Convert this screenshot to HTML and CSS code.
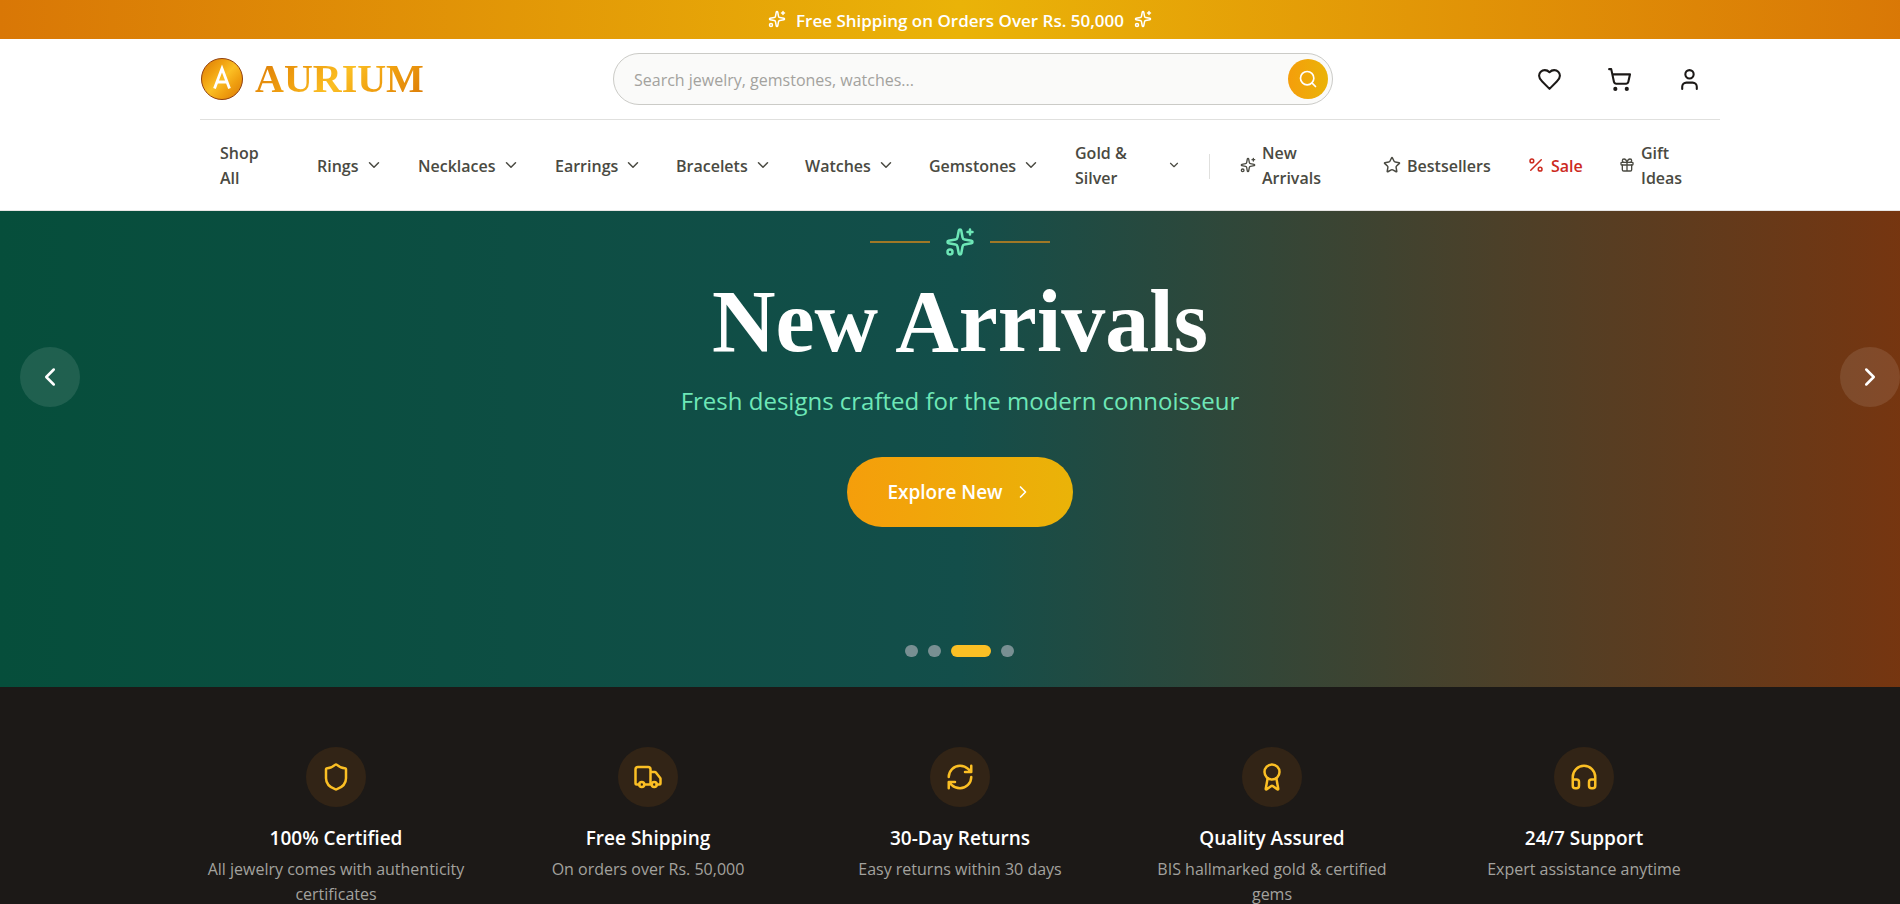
FILE: index.html
```html
<!DOCTYPE html>
<html lang="en">
<head>
<meta charset="utf-8">
<meta name="viewport" content="width=device-width, initial-scale=1">
<title>Aurium</title>
<link rel="stylesheet" href="styles.css">
</head>
<body>
<svg class="defs" aria-hidden="true">
  <symbol id="sparkles" viewBox="0 0 24 24"><path d="M11.017 2.814a1 1 0 0 1 1.966 0l1.051 5.558a2 2 0 0 0 1.594 1.594l5.558 1.051a1 1 0 0 1 0 1.966l-5.558 1.051a2 2 0 0 0-1.594 1.594l-1.051 5.558a1 1 0 0 1-1.966 0l-1.051-5.558a2 2 0 0 0-1.594-1.594l-5.558-1.051a1 1 0 0 1 0-1.966l5.558-1.051a2 2 0 0 0 1.594-1.594zM20 2v4M22 4h-4"/><circle cx="4" cy="20" r="2"/></symbol>
  <symbol id="down" viewBox="0 0 24 24"><path d="m6 9 6 6 6-6"/></symbol>
  <symbol id="right" viewBox="0 0 24 24"><path d="m9 18 6-6-6-6"/></symbol>
  <symbol id="left" viewBox="0 0 24 24"><path d="m15 18-6-6 6-6"/></symbol>
</svg>
<div class="page">
  <div class="promo">
    <svg class="icon i18"><use href="#sparkles"/></svg>
    <span>Free Shipping on Orders Over Rs. 50,000</span>
    <svg class="icon i18"><use href="#sparkles"/></svg>
  </div>
  <header class="header">
    <div class="wrap">
      <div class="top">
        <a class="brand" href="#">
          <svg class="mark" viewBox="0 0 44 44" aria-hidden="true">
            <defs><linearGradient id="gold" x1="0" y1="0" x2="1" y2="1"><stop offset="0" stop-color="#d97706"/><stop offset=".3" stop-color="#f0a010"/><stop offset=".5" stop-color="#fbbf24"/><stop offset=".7" stop-color="#f0a010"/><stop offset="1" stop-color="#d97706"/></linearGradient></defs>
            <circle cx="22" cy="22" r="20.5" fill="url(#gold)" stroke="#92400e"/>
            <path d="M14.500 31.500 22 11.500 29.500 31.500M17.500 25h9" fill="none" stroke="#fff" stroke-width="2.800"/>
          </svg>
          <span class="name">AURIUM</span>
        </a>
        <form class="search">
          <input type="text" aria-label="Search" placeholder="Search jewelry, gemstones, watches...">
          <button type="button" aria-label="Submit search"><svg class="icon i20" viewBox="0 0 24 24"><circle cx="11" cy="11" r="8"/><path d="m21 21-4.300-4.300"/></svg></button>
        </form>
        <div class="actions">
          <button type="button" aria-label="Wishlist"><svg class="icon i25" viewBox="0 0 24 24"><path d="M19 14c1.490-1.460 3-3.210 3-5.500A5.500 5.500 0 0 0 16.500 3c-1.760 0-3 .5-4.500 2-1.500-1.500-2.740-2-4.500-2A5.500 5.500 0 0 0 2 8.500c0 2.300 1.500 4.050 3 5.500l7 7Z"/></svg></button>
          <button type="button" aria-label="Cart"><svg class="icon i25" viewBox="0 0 24 24"><circle cx="8" cy="21" r="1"/><circle cx="19" cy="21" r="1"/><path d="M2.050 2.050h2l2.660 12.420a2 2 0 0 0 2 1.580h9.780a2 2 0 0 0 1.950-1.570l1.650-7.430H5.120"/></svg></button>
          <button type="button" aria-label="Account"><svg class="icon i25" viewBox="0 0 24 24"><circle cx="12" cy="7" r="4"/><path d="M19 21v-2a4 4 0 0 0-4-4H9a4 4 0 0 0-4 4v2"/></svg></button>
        </div>
      </div>
      <nav class="nav">
        <a href="#">Shop<br>All</a>
        <a href="#">Rings<svg class="icon i18"><use href="#down"/></svg></a>
        <a href="#">Necklaces<svg class="icon i18"><use href="#down"/></svg></a>
        <a href="#">Earrings<svg class="icon i18"><use href="#down"/></svg></a>
        <a href="#">Bracelets<svg class="icon i18"><use href="#down"/></svg></a>
        <a href="#">Watches<svg class="icon i18"><use href="#down"/></svg></a>
        <a href="#">Gemstones<svg class="icon i18"><use href="#down"/></svg></a>
        <a href="#"><span class="wide">Gold &amp;<br>Silver</span><svg class="icon i14"><use href="#down"/></svg></a>
        <span class="rule"></span>
        <a href="#"><svg class="icon i16"><use href="#sparkles"/></svg><span>New<br>Arrivals</span></a>
        <a href="#"><svg class="icon i18" viewBox="0 0 24 24"><path d="M11.525 2.295a.53.53 0 0 1 .95 0l2.310 4.679a2.120 2.120 0 0 0 1.595 1.160l5.166.756a.53.53 0 0 1 .294.904l-3.736 3.638a2.120 2.120 0 0 0-.611 1.878l.882 5.140a.53.53 0 0 1-.771.560l-4.618-2.428a2.120 2.120 0 0 0-1.973 0L6.396 21.010a.53.53 0 0 1-.770-.560l.881-5.139a2.120 2.120 0 0 0-.611-1.879L2.160 9.795a.53.53 0 0 1 .294-.906l5.165-.755a2.120 2.120 0 0 0 1.597-1.160z"/></svg>Bestsellers</a>
        <a href="#" class="sale"><svg class="icon i18" viewBox="0 0 24 24"><path d="M19 5 5 19"/><circle cx="6.500" cy="6.500" r="2.500"/><circle cx="17.500" cy="17.500" r="2.500"/></svg>Sale</a>
        <a href="#"><svg class="icon i16" viewBox="0 0 24 24"><rect x="3" y="8" width="18" height="4" rx="1"/><path d="M12 8v13M19 12v7a2 2 0 0 1-2 2H7a2 2 0 0 1-2-2v-7M7.500 8a2.500 2.500 0 0 1 0-5A4.800 8 0 0 1 12 8a4.800 8 0 0 1 4.500-5 2.500 2.500 0 0 1 0 5"/></svg><span>Gift<br>Ideas</span></a>
      </nav>
    </div>
  </header>
  <section class="hero">
    <button class="arrow" type="button" aria-label="Previous slide"><svg class="icon i30"><use href="#left"/></svg></button>
    <div class="slide">
      <div class="ornament"><span></span><svg class="icon i30"><use href="#sparkles"/></svg><span></span></div>
      <h1>New Arrivals</h1>
      <p>Fresh designs crafted for the modern connoisseur</p>
      <a class="cta" href="#">Explore New<svg class="icon i20"><use href="#right"/></svg></a>
      <div class="dots">
        <button type="button" aria-label="Slide 1"></button>
        <button type="button" aria-label="Slide 2"></button>
        <button type="button" aria-label="Slide 3" class="active"></button>
        <button type="button" aria-label="Slide 4"></button>
      </div>
    </div>
    <button class="arrow" type="button" aria-label="Next slide"><svg class="icon i30"><use href="#right"/></svg></button>
  </section>
  <section class="features">
    <div class="wrap grid">
      <div class="feature"><div class="disc"><svg class="icon i30" viewBox="0 0 24 24"><path d="M20 13c0 5-3.500 7.500-7.660 8.950a1 1 0 0 1-.670-.010C7.500 20.500 4 18 4 13V6a1 1 0 0 1 1-1c2 0 4.500-1.200 6.240-2.720a1.170 1.170 0 0 1 1.520 0C14.510 3.810 17 5 19 5a1 1 0 0 1 1 1z"/></svg></div><h2>100% Certified</h2><p>All jewelry comes with authenticity certificates</p></div>
      <div class="feature"><div class="disc"><svg class="icon i30" viewBox="0 0 24 24"><path d="M14 18V6a2 2 0 0 0-2-2H4a2 2 0 0 0-2 2v11a1 1 0 0 0 1 1h2M15 18H9M19 18h2a1 1 0 0 0 1-1v-3.650a1 1 0 0 0-.220-.624l-3.480-4.350A1 1 0 0 0 17.520 8H14"/><circle cx="17" cy="18" r="2"/><circle cx="7" cy="18" r="2"/></svg></div><h2>Free Shipping</h2><p>On orders over Rs. 50,000</p></div>
      <div class="feature"><div class="disc"><svg class="icon i30" viewBox="0 0 24 24"><path d="M3 12a9 9 0 0 1 9-9 9.750 9.750 0 0 1 6.740 2.740L21 8M21 3v5h-5M21 12a9 9 0 0 1-9 9 9.750 9.750 0 0 1-6.740-2.740L3 16M8 16H3v5"/></svg></div><h2>30-Day Returns</h2><p>Easy returns within 30 days</p></div>
      <div class="feature"><div class="disc"><svg class="icon i30" viewBox="0 0 24 24"><path d="m15.477 12.890 1.515 8.526a.5.5 0 0 1-.810.470l-3.580-2.687a1 1 0 0 0-1.197 0l-3.586 2.686a.5.5 0 0 1-.810-.469l1.514-8.526"/><circle cx="12" cy="8" r="6"/></svg></div><h2>Quality Assured</h2><p>BIS hallmarked gold &amp; certified gems</p></div>
      <div class="feature"><div class="disc"><svg class="icon i30" viewBox="0 0 24 24"><path d="M3 14h3a2 2 0 0 1 2 2v3a2 2 0 0 1-2 2H5a2 2 0 0 1-2-2v-7a9 9 0 0 1 18 0v7a2 2 0 0 1-2 2h-1a2 2 0 0 1-2-2v-3a2 2 0 0 1 2-2h3"/></svg></div><h2>24/7 Support</h2><p>Expert assistance anytime</p></div>
    </div>
  </section>
</div>
</body>
</html>
```
FILE: styles.css
```css
* { box-sizing: border-box; }
html { overflow: hidden; }
body { margin: 0; overflow: hidden; background: #1c1917; font-family: "Open Sans", "Noto Sans", sans-serif; font-size: 16px; line-height: 25px; }
a { color: inherit; text-decoration: none; }
button { border: 0; padding: 0; color: inherit; font: inherit; cursor: pointer; }
h1, h2, p { margin: 0; }
.defs { position: absolute; width: 0; height: 0; }
.icon { flex: none; fill: none; stroke: currentColor; stroke-width: 2; stroke-linecap: round; stroke-linejoin: round; }
.i14 { width: 14px; height: 14px; }
.i16 { width: 16px; height: 16px; }
.i18 { width: 18px; height: 18px; }
.i20 { width: 20px; height: 20px; }
.i25 { width: 25px; height: 25px; }
.i30 { width: 30px; height: 30px; }
.page { width: calc(100% + 20px); }
.wrap { max-width: 1520px; margin: 0 auto; }
.promo { display: flex; justify-content: center; align-items: center; gap: 10px; height: 39px; padding-top: 1px; color: #fff; font-size: 17px; font-weight: 600; background: linear-gradient(90deg, #d97706, #eab308, #d97706); }
.promo .icon { margin-bottom: 2px; }
.header { background: #fff; border-bottom: 1px solid #e7e5e4; }
.top { display: flex; justify-content: space-between; align-items: center; height: 81px; border-bottom: 1px solid #e0e0de; }
.brand { display: flex; align-items: center; gap: 11px; width: 232px; }
.mark { width: 44px; height: 44px; }
.name { font: bold 40px/48px "Liberation Serif", serif; color: transparent; background: linear-gradient(135deg, #d97706 0%, #f0a010 30%, #fbbf24 50%, #f0a010 70%, #d97706 100%); background-clip: text; }
.search { display: flex; align-items: center; width: 720px; height: 52px; padding: 0 4px 0 20px; border: 1px solid #cbcbc7; border-radius: 26px; background: #fafaf9; }
.search input { flex: 1; min-width: 0; border: 0; outline: 0; padding: 2px 0 0; background: none; font: inherit; color: #1c1917; }
.search input::placeholder { color: #a3a29e; opacity: 1; }
.search button { display: grid; place-items: center; width: 40px; height: 40px; border-radius: 50%; color: #fff; background: linear-gradient(90deg, #f59e0b, #eab308); }
.actions { display: flex; gap: 20px; width: 206px; padding-left: 10px; color: #1c1917; }
.actions button { display: grid; place-items: center; width: 50px; height: 50px; background: none; }
.nav { display: grid; grid-template-columns: 97fr 101fr 137fr 121fr 129fr 124fr 146fr 134fr 31fr 143fr 144fr 92fr 101fr; align-items: center; height: 90px; padding: 2px 0 0 20px; font-weight: 600; color: #4a4a42; }
.nav a { display: flex; align-items: center; gap: 6px; white-space: nowrap; }
.nav a:first-child { display: block; }
.nav .icon { margin-bottom: 3px; }
.wide { width: 86px; }
.rule { width: 1px; height: 25px; background: #e0e0de; }
.nav .sale { color: #cc2a1e; }
.hero { display: flex; justify-content: space-between; padding: 0 20px; color: #fff; background: linear-gradient(90deg, #064e3b, #134e4a 50%, #78350f); }
.arrow { display: grid; place-items: center; width: 60px; height: 60px; margin-top: 136px; border-radius: 50%; background: rgba(255, 255, 255, .1); }
.slide { display: flex; flex-direction: column; align-items: center; padding: 16px 0 30px; text-align: center; }
.ornament { display: flex; align-items: center; gap: 15px; color: #6ee7b7; }
.ornament span { width: 60px; height: 2px; background: #a07826; }
.slide h1 { margin-top: 20px; font: bold 88px/90px "Liberation Serif", serif; }
.slide p { margin-top: 14px; font-size: 24px; line-height: 40px; color: #6ee7b7; }
.cta { display: flex; align-items: center; gap: 10px; height: 70px; margin-top: 36px; padding: 0 40px; border-radius: 35px; font-size: 19px; font-weight: 600; background: linear-gradient(90deg, #f59e0b, #eab308); }
.dots { display: flex; gap: 10px; margin-top: 118px; }
.dots button { width: 13px; height: 12px; border-radius: 6px; background: #788f92; }
.dots .active { width: 40px; background: #fbbf24; }
.features { padding-top: 60px; background: #1c1917; }
.grid { display: grid; grid-template-columns: repeat(5, 1fr); gap: 40px; }
.feature { text-align: center; color: #a3a29e; }
.disc { display: grid; place-items: center; width: 60px; height: 60px; margin: 0 auto 18px; border-radius: 50%; color: #fbbf24; background: #322416; }
.feature h2 { margin-bottom: 5px; font-size: 19px; line-height: 27px; font-weight: 600; color: #fff; }
```
